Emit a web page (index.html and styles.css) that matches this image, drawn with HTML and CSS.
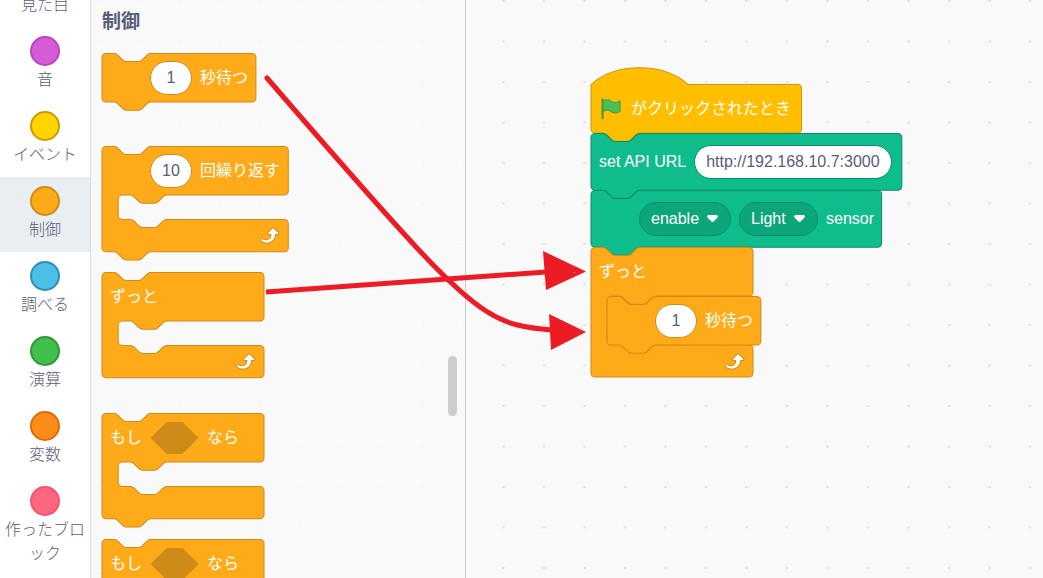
FILE: index.html
```html
<!DOCTYPE html>
<html lang="ja">
<head>
<meta charset="utf-8">
<meta name="viewport" content="width=device-width, initial-scale=1">
<title>制御ブロック</title>
<link rel="stylesheet" href="styles.css">
</head>
<body>
<svg class="defs" aria-hidden="true">
  <symbol id="repeat" viewBox="0 0 24 24">
    <path fill="#CF8B17" d="M23.3,11c-0.3,0.6-0.9,1-1.5,1h-1.6c-0.1,1.3-0.5,2.5-1.1,3.6c-0.9,1.7-2.3,3.2-4.1,4.1c-1.7,0.9-3.6,1.2-5.5,0.9c-1.8-0.3-3.5-1.1-4.9-2.3c-0.7-0.7-0.7-1.9,0-2.6c0.6-0.6,1.6-0.7,2.3-0.2H7c0.9,0.6,1.9,0.9,2.9,0.9s1.9-0.3,2.7-0.9c1.1-0.8,1.8-2.1,1.8-3.5h-1.5c-0.9,0-1.7-0.7-1.7-1.7c0-0.4,0.2-0.9,0.5-1.2l4.4-4.4c0.7-0.6,1.7-0.6,2.4,0L23,9.2C23.5,9.7,23.6,10.4,23.3,11z"/>
    <path fill="#fff" d="M21.8,11h-2.6c0,1.5-0.3,2.9-1,4.2c-0.8,1.6-2.1,2.8-3.7,3.6c-1.5,0.8-3.3,1.1-4.9,0.8c-1.6-0.2-3.2-1-4.4-2.1c-0.4-0.3-0.4-0.9-0.1-1.2c0.3-0.4,0.9-0.4,1.2-0.1l0,0c1,0.7,2.2,1.1,3.4,1.1s2.3-0.3,3.3-1c0.9-0.6,1.6-1.5,2-2.6c0.3-0.9,0.4-1.8,0.2-2.8h-2.4c-0.4,0-0.7-0.3-0.7-0.7c0-0.2,0.1-0.3,0.2-0.4l4.4-4.4c0.3-0.3,0.7-0.3,0.9,0L22,9.8c0.3,0.3,0.4,0.6,0.3,0.9S22,11,21.8,11z"/>
  </symbol>
  <symbol id="caret" viewBox="0 0 12.71 8.79">
    <path opacity=".1" d="M12.71,2.44A2.41,2.41,0,0,1,12,4.16L8.08,8.08a2.45,2.45,0,0,1-3.45,0L0.72,4.16A2.42,2.42,0,0,1,0,2.44,2.48,2.48,0,0,1,.71.71C1,0.47,1.43,0,6.36,0S11.75,0.46,12,.71A2.44,2.44,0,0,1,12.71,2.44Z"/>
    <path fill="#fff" d="M6.36,7.79a1.43,1.43,0,0,1-1-.42L1.42,3.45a1.44,1.44,0,0,1,0-2c0.56-.56,9.31-0.56,9.87,0a1.44,1.44,0,0,1,0,2L7.37,7.37A1.43,1.43,0,0,1,6.36,7.79Z"/>
  </symbol>
  <path id="wait-shape" d="M0,4A4,4 0 0,1 4,0H12c2,0 3,1 4,2l4,4c1,1 2,2 4,2h12c2,0 3,-1 4,-2l4,-4c1,-1 2,-2 4,-2H148a4,4 0 0,1 4,4v40a4,4 0 0,1 -4,4H48c-2,0 -3,1 -4,2l-4,4c-1,1 -2,2 -4,2h-12c-2,0 -3,-1 -4,-2l-4,-4c-1,-1 -2,-2 -4,-2H4a4,4 0 0,1 -4,-4z"/>
  <path id="if-shape" d="M0,4A4,4 0 0,1 4,0H12c2,0 3,1 4,2l4,4c1,1 2,2 4,2h12c2,0 3,-1 4,-2l4,-4c1,-1 2,-2 4,-2H156a4,4 0 0,1 4,4v40a4,4 0 0,1 -4,4H64c-2,0 -3,1 -4,2l-4,4c-1,1 -2,2 -4,2h-12c-2,0 -3,-1 -4,-2l-4,-4c-1,-1 -2,-2 -4,-2h-8a4,4 0 0,0 -4,4v16a4,4 0 0,0 4,4h8c2,0 3,1 4,2l4,4c1,1 2,2 4,2h12c2,0 3,-1 4,-2l4,-4c1,-1 2,-2 4,-2H156a4,4 0 0,1 4,4v24a4,4 0 0,1 -4,4H48c-2,0 -3,1 -4,2l-4,4c-1,1 -2,2 -4,2h-12c-2,0 -3,-1 -4,-2l-4,-4c-1,-1 -2,-2 -4,-2H4a4,4 0 0,1 -4,-4z"/>
</svg>

<div class="app">
  <nav class="categories" aria-label="カテゴリー">
    <div class="category-list">
      <button class="category"><span class="dot looks"></span>見た目</button>
      <button class="category"><span class="dot sound"></span>音</button>
      <button class="category"><span class="dot events"></span>イベント</button>
      <button class="category selected" aria-current="true"><span class="dot control"></span>制御</button>
      <button class="category"><span class="dot sensing"></span>調べる</button>
      <button class="category"><span class="dot operators"></span>演算</button>
      <button class="category"><span class="dot variables"></span>変数</button>
      <button class="category"><span class="dot custom"></span>作ったブロック</button>
    </div>
  </nav>

  <main class="editor">
    <svg class="grid" aria-hidden="true">
      <defs>
        <pattern id="dots" width="40.5" height="40.5" patternUnits="userSpaceOnUse">
          <rect x="6.5" y="0" width="2" height="2" fill="#ddd"/>
        </pattern>
      </defs>
      <rect width="100%" height="100%" fill="url(#dots)"/>
    </svg>

    <section class="palette">
      <h2 class="palette-title">制御</h2>

      <div class="block control-block simple space-large">
        <svg class="shape" viewBox="0 0 80 80"><use href="#wait-shape"/></svg>
        <div class="row indent"><input class="field number" aria-label="秒数" value="1"><span>秒待つ</span></div>
      </div>

      <div class="block control-block wide space-small">
        <svg class="shape" viewBox="0 0 80 80"><path d="M0,4A4,4 0 0,1 4,0H12c2,0 3,1 4,2l4,4c1,1 2,2 4,2h12c2,0 3,-1 4,-2l4,-4c1,-1 2,-2 4,-2H180a4,4 0 0,1 4,4v40a4,4 0 0,1 -4,4H64c-2,0 -3,1 -4,2l-4,4c-1,1 -2,2 -4,2h-12c-2,0 -3,-1 -4,-2l-4,-4c-1,-1 -2,-2 -4,-2h-8a4,4 0 0,0 -4,4v16a4,4 0 0,0 4,4h8c2,0 3,1 4,2l4,4c1,1 2,2 4,2h12c2,0 3,-1 4,-2l4,-4c1,-1 2,-2 4,-2H180a4,4 0 0,1 4,4v24a4,4 0 0,1 -4,4H48c-2,0 -3,1 -4,2l-4,4c-1,1 -2,2 -4,2h-12c-2,0 -3,-1 -4,-2l-4,-4c-1,-1 -2,-2 -4,-2H4a4,4 0 0,1 -4,-4z"/></svg>
        <div class="row indent"><input class="field number" aria-label="回数" value="10"><span>回繰り返す</span></div>
        <div class="mouth"></div>
        <div class="foot"><svg class="icon"><use href="#repeat"/></svg></div>
      </div>

      <div class="block control-block medium space-mid">
        <svg class="shape" viewBox="0 0 80 80"><path d="M0,4A4,4 0 0,1 4,0H12c2,0 3,1 4,2l4,4c1,1 2,2 4,2h12c2,0 3,-1 4,-2l4,-4c1,-1 2,-2 4,-2H156a4,4 0 0,1 4,4v40a4,4 0 0,1 -4,4H64c-2,0 -3,1 -4,2l-4,4c-1,1 -2,2 -4,2h-12c-2,0 -3,-1 -4,-2l-4,-4c-1,-1 -2,-2 -4,-2h-8a4,4 0 0,0 -4,4v16a4,4 0 0,0 4,4h8c2,0 3,1 4,2l4,4c1,1 2,2 4,2h12c2,0 3,-1 4,-2l4,-4c1,-1 2,-2 4,-2H156a4,4 0 0,1 4,4v24a4,4 0 0,1 -4,4H4a4,4 0 0,1 -4,-4z"/></svg>
        <div class="row"><span>ずっと</span></div>
        <div class="mouth"></div>
        <div class="foot"><svg class="icon"><use href="#repeat"/></svg></div>
      </div>

      <div class="block control-block medium space-small">
        <svg class="shape" viewBox="0 0 80 80"><use href="#if-shape"/></svg>
        <div class="row"><span>もし</span><svg class="condition" viewBox="0 0 48 32"><path d="M16,0H32L48,16L32,32H16L0,16z"/></svg><span>なら</span></div>
        <div class="mouth"></div>
        <div class="foot"></div>
      </div>

      <div class="block control-block medium">
        <svg class="shape" viewBox="0 0 80 80"><use href="#if-shape"/></svg>
        <div class="row"><span>もし</span><svg class="condition" viewBox="0 0 48 32"><path d="M16,0H32L48,16L32,32H16L0,16z"/></svg><span>なら</span></div>
        <div class="mouth"></div>
        <div class="foot"></div>
      </div>

      <div class="scroll-thumb"></div>
    </section>

    <section class="workspace" aria-label="スクリプト">
      <div class="script">
        <div class="block event-block">
          <svg class="shape" viewBox="0 0 80 80"><path d="M0,0c25,-22 71,-22 96,0H204a4,4 0 0,1 4,4v40a4,4 0 0,1 -4,4H48c-2,0 -3,1 -4,2l-4,4c-1,1 -2,2 -4,2h-12c-2,0 -3,-1 -4,-2l-4,-4c-1,-1 -2,-2 -4,-2H4a4,4 0 0,1 -4,-4z"/></svg>
          <div class="row">
            <svg class="icon" viewBox="0 0 24 24">
              <path fill="#45993D" d="M20.8,3.7c-0.4-0.2-0.9-0.1-1.2,0.2c-2,1.6-4.8,1.6-6.8,0c-2.3-1.9-5.6-2.3-8.3-1v-0.4c0-0.6-0.5-1-1-1s-1,0.4-1,1v18.8c0,0.5,0.5,1,1,1h0.1c0.5,0,1-0.5,1-1v-6.4c1-0.7,2.1-1.2,3.4-1.3c1.2,0,2.4,0.4,3.4,1.2c2.9,2.3,7,2.3,9.8,0c0.3-0.2,0.4-0.5,0.4-0.9V4.7C21.6,4.2,21.3,3.8,20.8,3.7z"/>
              <path fill="#4CBF56" d="M20.6,4.8l-0.1,9.1v0c-2.5,2-6.1,2-8.6,0.1c-1.1-0.9-2.5-1.4-4-1.4c-1.2,0.1-2.3,0.5-3.4,1.1V4c2.5-1.4,5.5-1.1,7.7,0.6c2.4,1.9,5.7,1.9,8.1,0L20.6,4.8z"/>
            </svg>
            <span>がクリックされたとき</span>
          </div>
        </div>

        <div class="block extension-block">
          <svg class="shape" viewBox="0 0 80 80"><path d="M0,4A4,4 0 0,1 4,0H12c2,0 3,1 4,2l4,4c1,1 2,2 4,2h12c2,0 3,-1 4,-2l4,-4c1,-1 2,-2 4,-2H303a4,4 0 0,1 4,4v48a4,4 0 0,1 -4,4H48c-2,0 -3,1 -4,2l-4,4c-1,1 -2,2 -4,2h-12c-2,0 -3,-1 -4,-2l-4,-4c-1,-1 -2,-2 -4,-2H4a4,4 0 0,1 -4,-4z"/></svg>
          <div class="row tall"><label for="api-url">set API URL</label><input class="field url" id="api-url" value="http://192.168.10.7:3000"></div>
        </div>

        <div class="block extension-block">
          <svg class="shape" viewBox="0 0 80 80"><path d="M0,4A4,4 0 0,1 4,0H12c2,0 3,1 4,2l4,4c1,1 2,2 4,2h12c2,0 3,-1 4,-2l4,-4c1,-1 2,-2 4,-2H283a4,4 0 0,1 4,4v48a4,4 0 0,1 -4,4H48c-2,0 -3,1 -4,2l-4,4c-1,1 -2,2 -4,2h-12c-2,0 -3,-1 -4,-2l-4,-4c-1,-1 -2,-2 -4,-2H4a4,4 0 0,1 -4,-4z"/></svg>
          <div class="row tall indent">
            <span class="dropdown"><select class="action" aria-label="動作"><option>enable</option><option>disable</option></select><svg class="caret"><use href="#caret"/></svg></span>
            <span class="dropdown"><select class="sensor" aria-label="センサー"><option>Light</option></select><svg class="caret"><use href="#caret"/></svg></span>
            <span>sensor</span>
          </div>
        </div>

        <div class="block control-block medium">
          <svg class="shape" viewBox="0 0 80 80"><path d="M0,4A4,4 0 0,1 4,0H12c2,0 3,1 4,2l4,4c1,1 2,2 4,2h12c2,0 3,-1 4,-2l4,-4c1,-1 2,-2 4,-2H156a4,4 0 0,1 4,4v40a4,4 0 0,1 -4,4H64c-2,0 -3,1 -4,2l-4,4c-1,1 -2,2 -4,2h-12c-2,0 -3,-1 -4,-2l-4,-4c-1,-1 -2,-2 -4,-2h-8a4,4 0 0,0 -4,4v40a4,4 0 0,0 4,4h8c2,0 3,1 4,2l4,4c1,1 2,2 4,2h12c2,0 3,-1 4,-2l4,-4c1,-1 2,-2 4,-2H156a4,4 0 0,1 4,4v24a4,4 0 0,1 -4,4H4a4,4 0 0,1 -4,-4z"/></svg>
          <div class="row"><span>ずっと</span></div>
          <div class="nested">
            <div class="block control-block simple">
              <svg class="shape" viewBox="0 0 80 80"><use href="#wait-shape"/></svg>
              <div class="row indent"><input class="field number" aria-label="秒数" value="1"><span>秒待つ</span></div>
            </div>
          </div>
          <div class="foot"><svg class="icon"><use href="#repeat"/></svg></div>
        </div>
      </div>
    </section>
  </main>

  <svg class="arrows" aria-hidden="true">
    <g fill="none" stroke="#ED1C24" stroke-width="5" stroke-linecap="round">
      <path d="M267,78C306,123 366,193 417,248C444,277 467,299 486,311C507,325 527,328 552,330"/>
      <path d="M266,292L546,272" stroke-linecap="butt"/>
    </g>
    <path fill="#ED1C24" d="M543,251L586,271.5L546,290zM549,314L586,332L551,350z"/>
    <rect x="574" y="272" width="1" height="1" fill="#fff"/>
  </svg>
</div>
</body>
</html>
```
FILE: styles.css
```css
* {
  box-sizing: border-box;
}

body {
  margin: 0;
  background: #f9f9f9;
  color: #575e75;
  font: 16px/24px "Liberation Sans", "Noto Sans CJK JP", sans-serif;
}

.defs {
  position: absolute;
  width: 0;
  height: 0;
}

.app {
  position: relative;
  display: flex;
  height: 100vh;
  overflow: hidden;
}

/* Category menu, scrolled part way down */
.categories {
  flex: none;
  width: 91px;
  overflow: hidden;
  background: #fff;
  border-right: 1px solid #d9d9d9;
}

.category-list {
  display: flex;
  flex-direction: column;
  margin-top: -48px;
}

.category {
  display: flex;
  flex-direction: column;
  align-items: center;
  gap: 2px;
  padding: 9px 4px 10px;
  border: 0;
  background: none;
  color: inherit;
  font: inherit;
  font-weight: 300;
  text-align: center;
}

.category.selected {
  background: #e9eef2;
}

.dot {
  width: 30px;
  height: 30px;
  border: 2px solid;
  border-radius: 50%;
}

.looks { background: #9966ff; border-color: #774dcb; }
.sound { background: #d65cd6; border-color: #bd42bd; }
.events { background: #ffd500; border-color: #cc9900; }
.control { background: #ffab19; border-color: #cf8b17; }
.sensing { background: #4cbfe6; border-color: #2e8eb8; }
.operators { background: #40bf4a; border-color: #389438; }
.variables { background: #ff8c1a; border-color: #db6e00; }
.custom { background: #ff6680; border-color: #ff4d6a; }

/* Editor */
.editor {
  position: relative;
  display: flex;
  flex: 1;
  min-width: 0;
}

.grid {
  position: absolute;
  width: 100%;
  height: 100%;
}

.palette {
  position: relative;
  flex: none;
  width: 375px;
  padding: 8px 11px;
  overflow: hidden;
  background: rgba(249, 249, 249, 0.8);
  border-right: 1px solid #ccc;
}

.palette-title {
  margin: 0 0 17px;
  font-size: 19px;
  line-height: 28px;
}

.space-small { margin-bottom: 21px; }
.space-mid { margin-bottom: 36px; }
.space-large { margin-bottom: 44px; }

.scroll-thumb {
  position: absolute;
  top: 356px;
  right: 8px;
  width: 9px;
  height: 60px;
  border-radius: 5px;
  background: #cecdce;
}

.workspace {
  position: relative;
  flex: 1;
  min-width: 0;
}

.script {
  position: absolute;
  left: 125px;
  top: 84px;
}

/* Blocks */
.block {
  position: relative;
  color: #fff;
  white-space: nowrap;
}

.simple { width: 154px; }
.medium { width: 162px; }
.wide { width: 186px; }

.control-block { fill: #ffab19; stroke: #cf8b17; }
.event-block { fill: #ffbf00; stroke: #cc9900; }
.extension-block { fill: #0fbd8c; stroke: #0b8e69; }

/* One shape unit is 81/80 of a pixel */
.shape {
  position: absolute;
  top: 0;
  left: 0;
  width: 81px;
  height: 81px;
  overflow: visible;
}

.shape > path,
.shape > use {
  transform: translate(0, 0.5px);
}

.row {
  position: relative;
  display: flex;
  align-items: center;
  gap: 8px;
  height: 49px;
  padding: 0 8px;
}

.row.tall {
  height: 57px;
}

.row.indent {
  padding-left: 48px;
}

.mouth {
  height: 24px;
}

.nested {
  padding-left: 16px;
}

.foot {
  position: relative;
  display: flex;
  align-items: center;
  justify-content: flex-end;
  height: 32px;
  padding-right: 8px;
}

.icon {
  width: 24px;
  height: 24px;
  stroke: none;
}

.condition {
  width: 49px;
  height: 32px;
  fill: #cf8b17;
  stroke: none;
}

.field {
  height: 34px;
  border: 1px solid #cf8b17;
  border-radius: 17px;
  background: #fff;
  color: #575e75;
  font: inherit;
}

.number {
  width: 42px;
  padding: 0;
  text-align: center;
}

.url {
  width: 198px;
  padding: 0 11px;
  border-color: #0b8e69;
}

.dropdown {
  position: relative;
  display: flex;
  align-items: center;
}

.dropdown select {
  height: 34px;
  padding: 0 11px;
  border: 1px solid #0b8e69;
  border-radius: 17px;
  background: #0da57a;
  color: #fff;
  font: inherit;
  appearance: none;
}

.action { width: 92px; }
.sensor { width: 79px; }

.caret {
  position: absolute;
  right: 12px;
  width: 13px;
  height: 9px;
  stroke: none;
  pointer-events: none;
}

/* Hand-drawn arrows over the editor */
.arrows {
  position: absolute;
  width: 100%;
  height: 100%;
  pointer-events: none;
}
```
